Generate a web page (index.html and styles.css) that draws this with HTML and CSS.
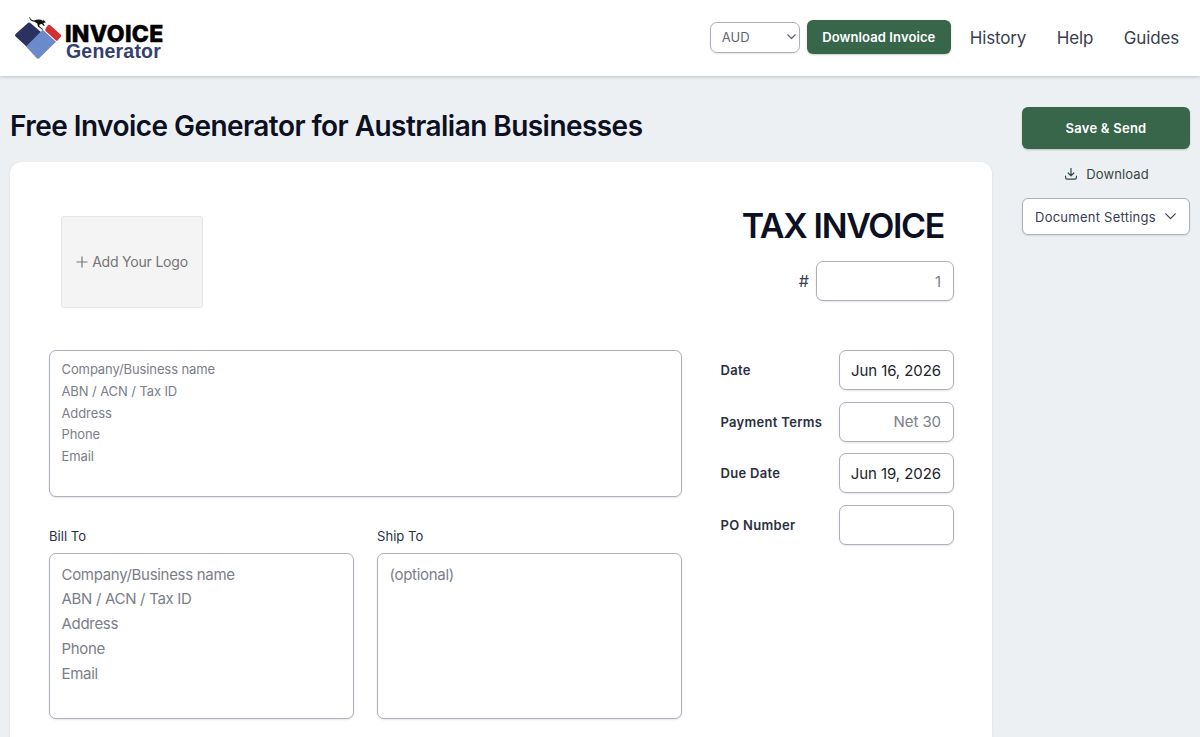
FILE: index.html
```
<!DOCTYPE html>
<html lang="en">

<head>
    <meta charset="UTF-8">
    <meta name="viewport" content="width=device-width, initial-scale=1.0">
    <title>Invoice Generator</title>
    <link rel="stylesheet" href="styles.css">
</head>

<body>
    <header class="navbar">
        <a href="#" class="brand">
            <svg class="brand-mark" width="49" height="45" viewBox="0 0 49 45">
                <path d="M16.7 8.3 L27.5 17.5 L13 32 L1.6 21.4 Q0.4 20.2 1.6 19 L13.6 8.2 Q15.2 6.9 16.7 8.3Z" fill="#2b3260"/>
                <path d="M28.7 14.8 L42 26.8 L25.2 43.3 Q24 44.4 22.8 43.3 L12 31.4Z" fill="#6b8aca"/>
                <path d="M33.8 10.2 Q35 9.2 36.2 10.3 L46.9 19.8 Q47.8 20.8 46.8 21.8 L43.8 25.2 Q42.8 26.2 41.6 25.2 L31.6 15.9 Q30.6 14.8 31.6 13.6Z" fill="#cf3030"/>
                <path d="M16 2 Q16 4.8 20 5.5 Q24 3.9 27 4.7 L29.3 6.1 L29.7 4.2 L30.5 5.9 L32 7.3 L29.2 8 L30.8 10.8 L29.8 11 L27.8 9 L25.6 9.6 L25.2 11 L29.4 14.4 L28.9 15 L24 11.4 L23.2 8.6 L20.5 6.8 Q15.4 6.2 15.4 2Z" fill="#111"/>
            </svg>
            <span class="brand-text">
                <span class="brand-top">INVOICE</span>
                <span class="brand-bottom">Generator</span>
            </span>
        </a>

        <nav class="nav-actions">
            <button class="currency">
                <span>AUD</span>
                <svg width="9" height="6" viewBox="0 0 9 6"><path d="M0.7 0.8 L4.5 4.5 L8.3 0.8"/></svg>
            </button>
            <button class="btn btn-primary btn-nav">Download Invoice</button>
            <a href="#" class="nav-link">History</a>
            <a href="#" class="nav-link">Help</a>
            <a href="#" class="nav-link">Guides</a>
        </nav>
    </header>

    <main class="page">
        <section class="editor">
            <h1>Free Invoice Generator for Australian Businesses</h1>

            <div class="invoice-card">
                <div class="invoice-top">
                    <button class="logo-upload">
                        <svg width="12" height="12" viewBox="0 0 12 12"><path d="M6 0.9 V11.1 M0.9 6 H11.1"/></svg>
                        <span>Add Your Logo</span>
                    </button>
                    <div class="invoice-heading">
                        <h2>TAX INVOICE</h2>
                        <div class="number-row">
                            <label for="number">#</label>
                            <input type="text" id="number" class="field" placeholder="1">
                        </div>
                    </div>
                </div>

                <div class="invoice-body">
                    <div class="parties">
                        <textarea class="field from" placeholder="Company/Business name&#10;ABN / ACN / Tax ID&#10;Address&#10;Phone&#10;Email"></textarea>
                        <div class="party-row">
                            <div class="party">
                                <label for="bill-to">Bill To</label>
                                <textarea id="bill-to" class="field" placeholder="Company/Business name&#10;ABN / ACN / Tax ID&#10;Address&#10;Phone&#10;Email"></textarea>
                            </div>
                            <div class="party">
                                <label for="ship-to">Ship To</label>
                                <textarea id="ship-to" class="field" placeholder="(optional)"></textarea>
                            </div>
                        </div>
                    </div>

                    <div class="details">
                        <label for="date">Date</label>
                        <input type="text" id="date" class="field" value="Jun 16, 2026">
                        <label for="terms">Payment Terms</label>
                        <input type="text" id="terms" class="field" placeholder="Net 30">
                        <label for="due">Due Date</label>
                        <input type="text" id="due" class="field" value="Jun 19, 2026">
                        <label for="po">PO Number</label>
                        <input type="text" id="po" class="field">
                    </div>
                </div>
            </div>
        </section>

        <aside class="sidebar">
            <button class="btn btn-primary btn-save">Save &amp; Send</button>
            <button class="btn-download">
                <svg width="12" height="12" viewBox="0 0 12 12"><path d="M6 0.5 V7.6 M3.2 5 L6 7.8 L8.8 5 M0.6 8.2 V9.6 Q0.6 11.2 2.2 11.2 H9.8 Q11.4 11.2 11.4 9.6 V8.2"/></svg>
                <span>Download</span>
            </button>
            <button class="btn-settings">
                <span>Document Settings</span>
                <svg width="11" height="7" viewBox="0 0 11 7"><path d="M0.8 0.8 L5.5 5.6 L10.2 0.8"/></svg>
            </button>
        </aside>
    </main>
</body>

</html>
```
FILE: styles.css
```
* {
    margin: 0;
    padding: 0;
    box-sizing: border-box;
    font-family: Inter, "Liberation Sans", sans-serif;
}

:root {
    --bg: #ecf0f3;
    --green: #38664a;
    --ink: #0c1022;
    --text: #3a3d4e;
    --muted: #7b7e88;
    --border: #adafbd;
    --field-shadow: 0 1px 2px rgba(0, 0, 0, 0.1);
}

body {
    display: flex;
    flex-direction: column;
    background-color: var(--bg);
    color: var(--text);
    height: 100vh;
    overflow: hidden;
}

button {
    border: none;
    background: none;
    cursor: pointer;
    color: inherit;
}

svg {
    flex-shrink: 0;
    fill: none;
    stroke: currentColor;
    stroke-width: 1.2;
    stroke-linecap: round;
    stroke-linejoin: round;
}

.navbar {
    display: flex;
    flex-shrink: 0;
    justify-content: space-between;
    align-items: center;
    height: 76px;
    padding: 0 21px 2px 14px;
    background-color: #fff;
    box-shadow: 0 1px 3px rgba(0, 0, 0, 0.2);
}

.brand {
    display: flex;
    align-items: center;
    gap: 2px;
    text-decoration: none;
}

.brand-mark {
    stroke: none;
}

.brand-text {
    display: flex;
    flex-direction: column;
    padding-top: 11px;
}

.brand-top {
    font-size: 23px;
    line-height: 18px;
    font-weight: 800;
    letter-spacing: 0.3px;
    color: #000;
    -webkit-text-stroke: 0.5px #000;
}

.brand-bottom {
    padding-left: 1px;
    font-family: "Liberation Sans", Arial, sans-serif;
    font-size: 19.5px;
    line-height: 17px;
    font-weight: 700;
    letter-spacing: 0.2px;
    color: #353f70;
}

.nav-actions {
    display: flex;
    align-items: center;
}

.currency {
    display: flex;
    justify-content: space-between;
    align-items: center;
    width: 90px;
    height: 31px;
    margin-right: 7px;
    padding: 0 3px 0 11px;
    border: 1px solid var(--border);
    border-radius: 7px;
    box-shadow: var(--field-shadow);
    font-size: 13px;
    color: #62646f;
}

.btn {
    border-radius: 6px;
    font-size: 13px;
    font-weight: 600;
    letter-spacing: 0.1px;
    box-shadow: 0 1px 2px rgba(0, 0, 0, 0.2);
}

.btn-primary {
    background-color: var(--green);
    color: #fff;
}

.btn-nav {
    width: 144px;
    height: 34px;
    margin-right: 19px;
}

.nav-link {
    padding-top: 1px;
    font-size: 17px;
    letter-spacing: -0.15px;
    color: var(--text);
    text-decoration: none;
}

.nav-link + .nav-link {
    margin-left: 30.5px;
}

.page {
    display: flex;
    flex: 1;
    justify-content: space-between;
    padding: 31px 10px 0;
}

.editor {
    display: flex;
    flex-direction: column;
    width: 982px;
}

h1 {
    height: 55px;
    font-size: 28px;
    line-height: 38px;
    font-weight: 600;
    letter-spacing: -0.55px;
    color: var(--ink);
    white-space: nowrap;
}

.invoice-card {
    flex: 1;
    padding: 43px 38px 0 39px;
    background-color: #fff;
    border-radius: 12px 12px 0 0;
    box-shadow: 0 1px 3px rgba(0, 0, 0, 0.08);
}

.invoice-top {
    display: flex;
    justify-content: space-between;
    height: 145px;
}

.logo-upload {
    display: flex;
    align-items: center;
    justify-content: center;
    gap: 4px;
    width: 142px;
    height: 92px;
    margin: 11px 0 0 12px;
    padding-bottom: 1px;
    border: 1px solid #e4e4e5;
    border-radius: 3px;
    background-color: #f4f4f4;
    font-size: 14px;
    letter-spacing: -0.2px;
    color: #747474;
}

.invoice-heading {
    display: flex;
    flex-direction: column;
    align-items: flex-end;
}

h2 {
    height: 56px;
    padding-right: 10px;
    font-size: 34px;
    line-height: 42px;
    font-weight: 600;
    letter-spacing: -1.35px;
    color: var(--ink);
}

.number-row {
    display: flex;
    align-items: center;
    gap: 7px;
    font-size: 16px;
}

.number-row .field {
    width: 138px;
}

.field {
    display: block;
    width: 100%;
    height: 40px;
    padding: 0 12px;
    border: 1px solid var(--border);
    border-radius: 7px;
    background-color: #fff;
    box-shadow: var(--field-shadow);
    font-size: 15px;
    color: #22242b;
    outline: none;
    resize: none;
}

.field::placeholder {
    color: var(--muted);
}

input.field {
    text-align: right;
}

.details input.field {
    padding: 0 12px 0 8px;
    letter-spacing: -0.08px;
}

textarea.field {
    height: 166px;
    padding: 8.5px 11.5px;
    line-height: 24.8px;
    letter-spacing: -0.3px;
    overflow: hidden;
}

.invoice-body {
    display: flex;
    justify-content: space-between;
}

.parties {
    width: 633px;
}

textarea.from {
    height: 147px;
    padding-top: 8px;
    font-size: 13px;
    line-height: 21.75px;
    letter-spacing: -0.1px;
}

.party-row {
    display: grid;
    grid-template-columns: 1fr 1fr;
    gap: 23px;
    margin-top: 29px;
}

.party label {
    display: block;
    height: 27px;
    font-size: 13px;
    line-height: 20px;
    letter-spacing: 0.05px;
    color: #2b2f41;
}

.details {
    display: grid;
    grid-template-columns: 1fr 115px;
    grid-auto-rows: 40px;
    row-gap: 11.5px;
    align-items: center;
    align-self: flex-start;
    width: 233.5px;
}

.details label {
    font-size: 13px;
    font-weight: 600;
    letter-spacing: 0.3px;
    color: #2b2f41;
}

.sidebar {
    display: flex;
    flex-direction: column;
    width: 168px;
    font-size: 13px;
}

.btn-save {
    height: 42px;
    letter-spacing: 0.25px;
}

.btn-download {
    display: flex;
    align-items: center;
    justify-content: center;
    gap: 9px;
    height: 49px;
    padding-left: 2px;
    font-size: 13px;
    letter-spacing: 0.12px;
    color: #33473e;
}

.btn-settings {
    display: flex;
    align-items: center;
    justify-content: space-between;
    height: 37px;
    padding: 0 13px 0 12px;
    border: 1px solid var(--border);
    border-radius: 6px;
    background-color: #fff;
    box-shadow: var(--field-shadow);
    font-size: 13px;
    letter-spacing: 0.25px;
}
```
